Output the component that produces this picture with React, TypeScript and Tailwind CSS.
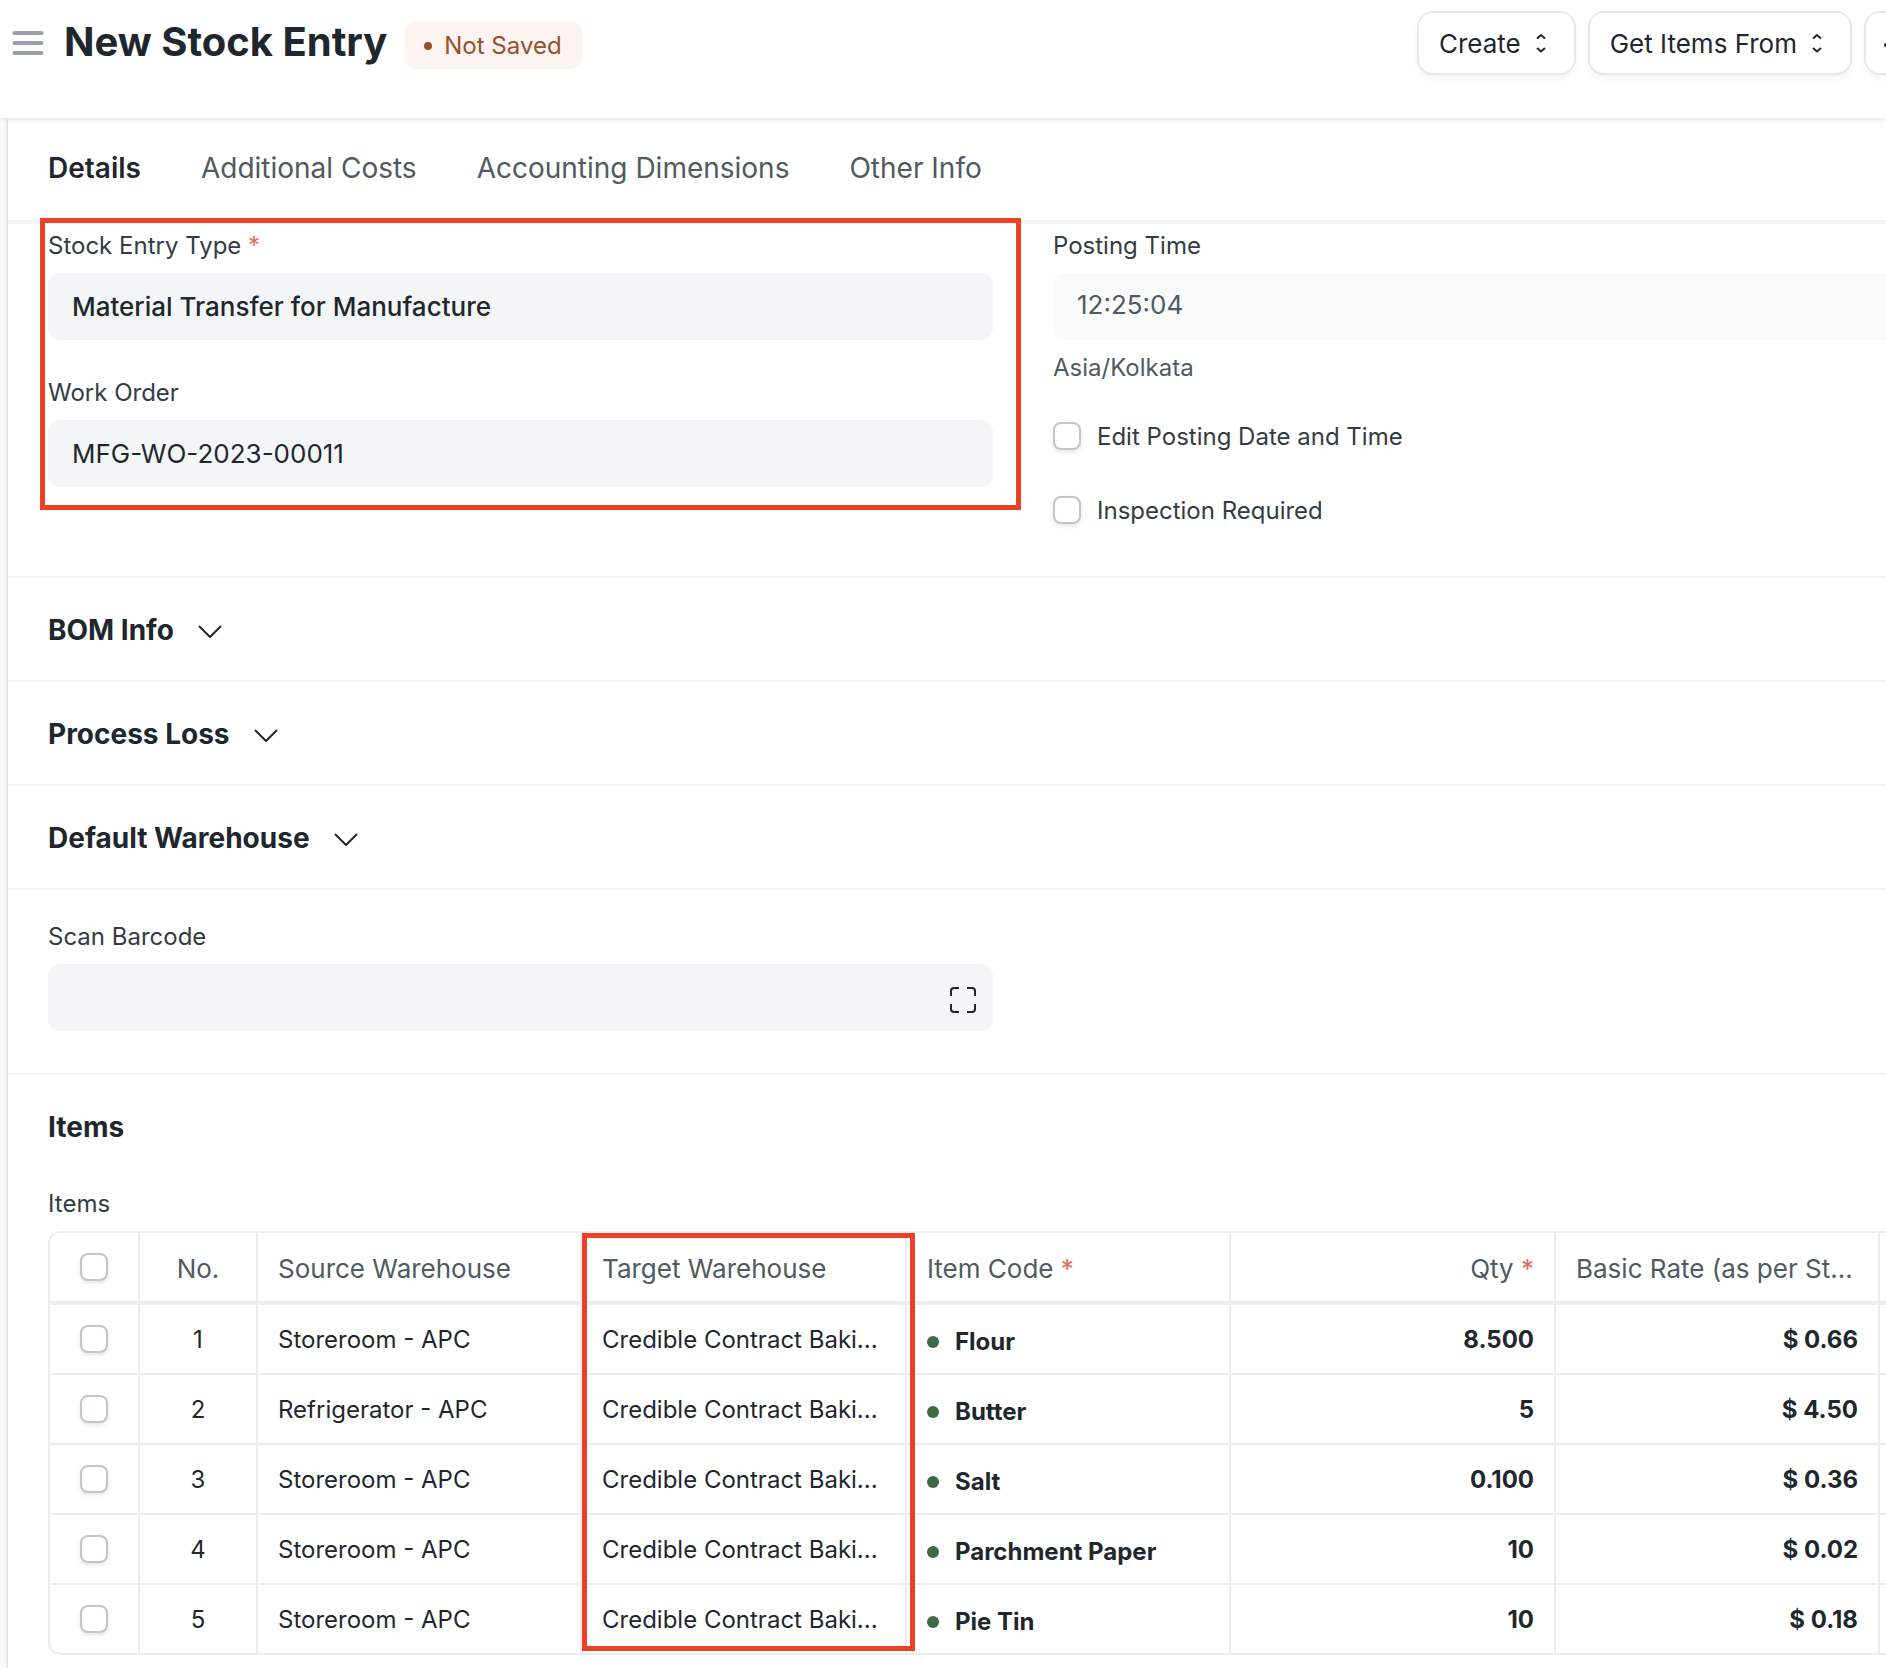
import React from "react";

const tabs = ["Details", "Additional Costs", "Accounting Dimensions", "Other Info"];

const rows = [
  { no: 1, source: "Storeroom - APC", item: "Flour", qty: "8.500", rate: "$ 0.66" },
  { no: 2, source: "Refrigerator - APC", item: "Butter", qty: "5", rate: "$ 4.50" },
  { no: 3, source: "Storeroom - APC", item: "Salt", qty: "0.100", rate: "$ 0.36" },
  { no: 4, source: "Storeroom - APC", item: "Parchment Paper", qty: "10", rate: "$ 0.02" },
  { no: 5, source: "Storeroom - APC", item: "Pie Tin", qty: "10", rate: "$ 0.18" },
];

const labelClass = "mb-[11px] block pt-px text-2xl leading-8 text-[#333c44]";
const inputClass =
  "block h-[67px] w-full rounded-xl bg-[#f4f5f6] px-6 text-[26px] text-[#1f272e] outline-none";
const buttonClass =
  "flex h-[60px] items-center gap-[15px] rounded-[14px] bg-white pr-7 pl-5 text-[26px] text-[#1f272e] shadow-[0_0_0_2px_#e8e8e8,0_2px_1px_#cfcfcf,0_4px_8px_#0000000f]";
const checkCell = "border-r-2 border-b-2 border-[#ebeef0]";
const cell = "border-r-2 border-b-2 border-[#ebeef0] px-5 pt-0.5";
const checkHeadCell = "border-r-2 border-b-4 border-[#ebeef0]";
const headCell = "border-r-2 border-b-4 border-[#ebeef0] px-5 pt-1 font-normal";

function Required() {
  return <span className="text-[#e26a63]"> *</span>;
}

function SelectIcon() {
  return (
    <svg width="10" height="20" viewBox="0 0 10 20" fill="none" stroke="#1f272e" strokeWidth="2" aria-hidden="true">
      <path d="M1 5.5 5 2l4 3.500M1 15l4 3.500L9 15" />
    </svg>
  );
}

function Checkbox({ id, label }: { id?: string; label?: string }) {
  return (
    <input
      type="checkbox"
      id={id}
      aria-label={label}
      className="block size-7 shrink-0 appearance-none rounded-lg border-2 border-[#c0c6cb] bg-white shadow-[0_2px_4px_#0000001a]"
    />
  );
}

function CheckField({ id, label }: { id: string; label: string }) {
  return (
    <div className="flex h-8 items-center gap-4">
      <Checkbox id={id} />
      <label htmlFor={id} className="pt-0.5 text-2xl text-[#333c44]">
        {label}
      </label>
    </div>
  );
}

function Collapsible({ title }: { title: string }) {
  return (
    <section className="flex h-[104px] items-center border-t-2 border-[#f4f5f6] px-10 pt-0.5">
      <button type="button" className="flex items-center gap-6 text-[28px] font-bold text-[#1f272e]">
        {title}
        <svg className="mt-1" width="24" height="14" viewBox="0 0 24 14" fill="none" stroke="#1f272e" strokeWidth="2" aria-hidden="true">
          <path d="m1.5 1.5 10.500 10.500L22.500 1.500" strokeLinecap="round" strokeLinejoin="round" />
        </svg>
      </button>
    </section>
  );
}

export default function App() {
  return (
    <div className="min-h-screen overflow-hidden bg-[#f8faf9] font-['Inter',sans-serif] text-[#1f272e]">
      <header className="relative z-10 flex h-[118px] items-start justify-between bg-white pl-3 shadow-[0_1px_6px_#0000001f]">
        <div className="flex h-[86px] items-center">
          <button type="button" aria-label="Toggle sidebar" className="mr-5">
            <svg width="32" height="24" viewBox="0 0 32 24" stroke="#98a1a9" strokeWidth="4" strokeLinecap="round" aria-hidden="true">
              <path d="M2.500 2h27M2.500 12h27M2.500 22h27" />
            </svg>
          </button>
          <h1 className="pb-0.5 text-[40px] font-bold">New Stock Entry</h1>
          <span className="mt-1 ml-[17px] flex h-12 items-center gap-3 rounded-xl bg-[#fdf4f1] px-5 pt-0.5 text-2xl text-[#97502f]">
            <span className="size-2 rounded-full bg-[#97502f]" />
            Not Saved
          </span>
        </div>
        <div className="flex gap-4 pt-[13px]">
          <button type="button" className={buttonClass}>
            Create
            <SelectIcon />
          </button>
          <button type="button" className={buttonClass}>
            Get Items From
            <SelectIcon />
          </button>
          <button
            type="button"
            aria-label="Menu"
            className="flex h-[60px] w-5 items-center justify-end rounded-l-[14px] bg-white shadow-[0_0_0_2px_#e8e8e8,0_2px_1px_#cfcfcf,0_4px_8px_#0000000f]"
          >
            <svg className="mt-1" width="2" height="4" viewBox="0 0 2 4" fill="#1f272e" aria-hidden="true">
              <circle cx="2" cy="2" r="2" />
            </svg>
          </button>
        </div>
      </header>

      <main className="ml-2 min-h-[1550px] bg-white shadow-[0_0_3px_#00000040]">
        <nav className="flex h-[106px] items-center gap-[60px] border-b-4 border-[#f3f4f6] px-10 pb-0.5 text-[28px]">
          {tabs.map((tab, i) => (
            <a key={tab} href="#" className={i === 0 ? "font-semibold text-[#1f272e]" : "text-[#505a62]"}>
              {tab}
            </a>
          ))}
        </nav>

        <section className="relative grid grid-cols-[945fr_833fr] gap-[60px] pt-[5px] pb-[50px] pl-10">
          <div className="flex flex-col gap-9">
            <div>
              <label htmlFor="entry-type" className={labelClass}>
                Stock Entry Type
                <Required />
              </label>
              <input id="entry-type" className={inputClass + " font-medium"} defaultValue="Material Transfer for Manufacture" />
            </div>
            <div>
              <label htmlFor="work-order" className={labelClass}>
                Work Order
              </label>
              <input id="work-order" className={inputClass} defaultValue="MFG-WO-2023-00011" />
            </div>
          </div>
          <div>
            <label htmlFor="posting-time" className={labelClass}>
              Posting Time
            </label>
            <input
              id="posting-time"
              readOnly
              className="block h-[67px] w-full rounded-l-xl bg-[#f9fafa] px-6 pb-1 text-[26px] text-[#505a62] outline-none"
              defaultValue="12:25:04"
            />
            <p className="mt-3 mb-9 text-2xl leading-8 text-[#505a62]">Asia/Kolkata</p>
            <div className="flex flex-col gap-[42px]">
              <CheckField id="edit-posting" label="Edit Posting Date and Time" />
              <CheckField id="inspection" label="Inspection Required" />
            </div>
          </div>
          <div className="pointer-events-none absolute top-[-6px] left-8 h-[292px] w-[981px] border-[5px] border-[#ee4026]" />
        </section>

        <Collapsible title="BOM Info" />
        <Collapsible title="Process Loss" />
        <Collapsible title="Default Warehouse" />

        <section className="grid grid-cols-[945fr_833fr] gap-[60px] border-t-2 border-[#f4f5f6] pt-[30px] pb-[42px] pl-10">
          <div>
            <label htmlFor="barcode" className={labelClass}>
              Scan Barcode
            </label>
            <div className="flex items-center rounded-xl bg-[#f4f5f6] pr-4">
              <input id="barcode" className={inputClass} />
              <button type="button" aria-label="Scan" className="pt-1">
                <svg width="28" height="28" viewBox="0 0 28 28" fill="none" stroke="#1f272e" strokeWidth="2" aria-hidden="true">
                  <path d="M2 10V5a3 3 0 0 1 3-3h5M18 2h5a3 3 0 0 1 3 3v5M26 18v5a3 3 0 0 1-3 3h-5M10 26H5a3 3 0 0 1-3-3v-5" />
                </svg>
              </button>
            </div>
          </div>
        </section>

        <section className="border-t-2 border-[#f4f5f6] pt-8 pb-3 pl-10">
          <h2 className="mb-10 text-[28px] leading-10 font-bold">Items</h2>
          <p className={labelClass}>Items</p>
          <div className="relative">
            <div className="overflow-hidden rounded-l-xl border-2 border-r-0 border-b-0 border-[#ebeef0]">
              <table className="w-full table-fixed border-separate border-spacing-0 text-2xl">
                <colgroup>
                  <col className="w-[90px]" />
                  <col className="w-[118px]" />
                  <col className="w-[324px]" />
                  <col className="w-[325px]" />
                  <col className="w-[324px]" />
                  <col className="w-[325px]" />
                  <col className="w-[324px]" />
                  <col />
                </colgroup>
                <thead>
                  <tr className="h-[72px] text-left text-[26px] text-[#505a62]">
                    <th className={checkHeadCell}>
                      <div className="flex justify-center">
                        <Checkbox label="Select all" />
                      </div>
                    </th>
                    <th className={headCell + " text-center"}>No.</th>
                    <th className={headCell}>Source Warehouse</th>
                    <th className={headCell}>Target Warehouse</th>
                    <th className={headCell}>
                      Item Code
                      <Required />
                    </th>
                    <th className={headCell + " text-right"}>
                      Qty
                      <Required />
                    </th>
                    <th className={headCell + " whitespace-nowrap"}>Basic Rate (as per St...</th>
                    <td className="border-b-4 border-[#ebeef0]" />
                  </tr>
                </thead>
                <tbody>
                  {rows.map((row) => (
                    <tr key={row.no} className="h-[70px] last:[&>td:first-child]:rounded-bl-xl">
                      <td className={checkCell}>
                        <div className="flex justify-center">
                          <Checkbox label={"Select row " + row.no} />
                        </div>
                      </td>
                      <td className={cell + " text-center"}>{row.no}</td>
                      <td className={cell}>{row.source}</td>
                      <td className={cell + " whitespace-nowrap"}>Credible Contract Baki...</td>
                      <td className={cell + " font-bold"}>
                        <div className="flex items-center gap-4 pt-1">
                          <span className="size-3 rounded-full bg-[#3b6a45]" />
                          {row.item}
                        </div>
                      </td>
                      <td className={cell + " text-right font-bold"}>{row.qty}</td>
                      <td className={cell + " text-right font-bold"}>{row.rate}</td>
                      <td className="border-b-2 border-[#ebeef0]" />
                    </tr>
                  ))}
                </tbody>
              </table>
            </div>
            <div className="pointer-events-none absolute top-[2px] left-[534px] h-[418px] w-[333px] border-[5px] border-[#ee4026]" />
          </div>
        </section>
      </main>
    </div>
  );
}
